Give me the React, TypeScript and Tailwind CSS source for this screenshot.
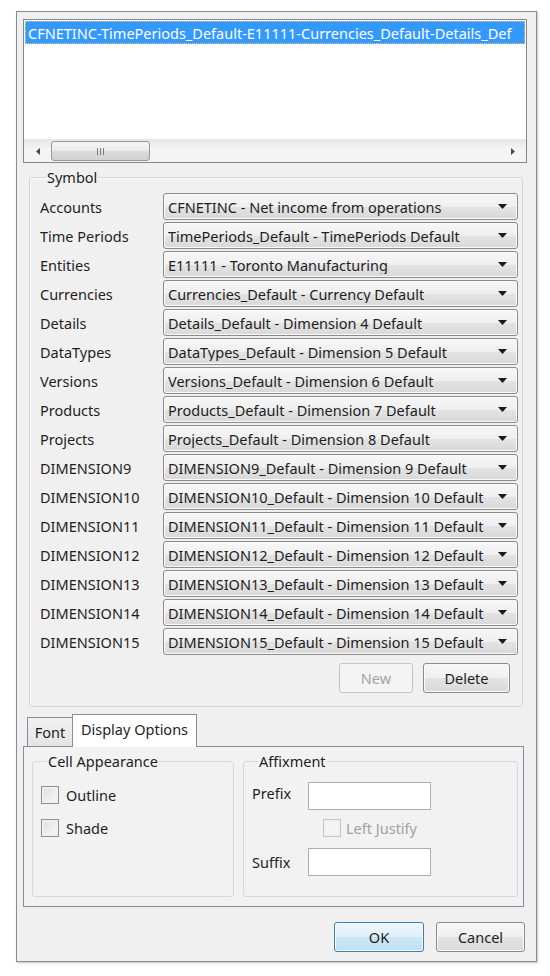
import React from "react";

const ROWS: [string, string][] = [
  ["Accounts", "CFNETINC - Net income from operations"],
  ["Time Periods", "TimePeriods_Default - TimePeriods Default"],
  ["Entities", "E11111 - Toronto Manufacturing"],
  ["Currencies", "Currencies_Default - Currency Default"],
  ["Details", "Details_Default - Dimension 4 Default"],
  ["DataTypes", "DataTypes_Default - Dimension 5 Default"],
  ["Versions", "Versions_Default - Dimension 6 Default"],
  ["Products", "Products_Default - Dimension 7 Default"],
  ["Projects", "Projects_Default - Dimension 8 Default"],
  ["DIMENSION9", "DIMENSION9_Default - Dimension 9 Default"],
  ["DIMENSION10", "DIMENSION10_Default - Dimension 10 Default"],
  ["DIMENSION11", "DIMENSION11_Default - Dimension 11 Default"],
  ["DIMENSION12", "DIMENSION12_Default - Dimension 12 Default"],
  ["DIMENSION13", "DIMENSION13_Default - Dimension 13 Default"],
  ["DIMENSION14", "DIMENSION14_Default - Dimension 14 Default"],
  ["DIMENSION15", "DIMENSION15_Default - Dimension 15 Default"],
];

const btnGray =
  "border border-[#8a8a8a] rounded-[3px] bg-[linear-gradient(to_bottom,#f7f7f7_0%,#efefef_50%,#e3e3e3_51%,#d9d9d9_100%)] shadow-[inset_0_0_0_1px_#fbfbfb]";

function DownArrow() {
  return (
    <svg width="9" height="5" viewBox="0 0 9 5" className="shrink-0">
      <path d="M0 0 H9 L4.5 5 Z" fill="#1a1a1a" />
    </svg>
  );
}

function Combo({ value }: { value: string }) {
  return (
    <div className={`flex-1 h-[27px] flex items-center pl-[4px] pr-[10px] ${btnGray}`}>
      <span className="flex-1 overflow-hidden whitespace-nowrap">{value}</span>
      <DownArrow />
    </div>
  );
}

function Checkbox({ disabled }: { disabled?: boolean }) {
  return (
    <div
      className={`w-[18px] h-[18px] shrink-0 border ${
        disabled ? "border-[#c4c4c4] bg-[#f4f4f4]" : "border-[#8f8f8f] bg-[linear-gradient(135deg,#dcdcdc,#fbfbfb)]"
      } shadow-[inset_0_0_0_2px_#f0f0f0]`}
    />
  );
}

export default function App() {
  return (
    <div className="min-h-screen bg-white pt-[11px] pl-[16px] font-['Noto_Sans',sans-serif] text-[14.5px] leading-[18px] text-[#1e1e1e]">
      <div className="w-[521px] h-[951px] border border-[#8c8c8c] bg-[#f0f0f0] shadow-[1px_1px_2px_rgba(0,0,0,0.25)] flex flex-col pl-[6px] pt-[7px]">
        {/* list of symbols */}
        <div className="w-[504px] h-[144px] border border-[#828790] bg-white flex flex-col">
          <div className="mt-[1px] mx-[1px] h-[23px] bg-[#3399ff] text-white flex items-center pl-[3px] overflow-hidden whitespace-nowrap outline-1 outline-dotted outline-[#f3c47b] -outline-offset-1">
            CFNETINC-TimePeriods_Default-E11111-Currencies_Default-Details_Def
          </div>
          <div className="flex-1" />
          <div className="h-[23px] flex items-center bg-[linear-gradient(to_bottom,#e6e6e6,#f4f4f4_40%,#f4f4f4)] border-t border-[#e9e9e9]">
            <div className="w-[27px] flex justify-center">
              <svg width="4" height="7" viewBox="0 0 4 7">
                <path d="M4 0 V7 L0 3.5 Z" fill="#4a4a4a" />
              </svg>
            </div>
            <div className="w-[99px] h-[20px] border border-[#979797] rounded-[3px] bg-[linear-gradient(to_bottom,#f6f6f6,#e9e9e9_50%,#dbdbdb_51%,#d2d2d2)] flex items-center justify-center gap-[2px]">
              <span className="w-[1px] h-[7px] bg-[#7a7a7a]" />
              <span className="w-[1px] h-[7px] bg-[#7a7a7a]" />
              <span className="w-[1px] h-[7px] bg-[#7a7a7a]" />
            </div>
            <div className="flex-1" />
            <div className="w-[27px] flex justify-center">
              <svg width="4" height="7" viewBox="0 0 4 7">
                <path d="M0 0 V7 L4 3.5 Z" fill="#4a4a4a" />
              </svg>
            </div>
          </div>
        </div>

        {/* Symbol group */}
        <fieldset className="ml-[6px] mt-[5px] w-[494px] border border-[#d5d5d5] rounded-[3px] pl-[10px] pr-[4px] pt-[7px] pb-[13px] shadow-[inset_1px_1px_0_#fafafa]">
          <legend className="ml-[6px] px-[1px]">Symbol</legend>
          <div className="flex flex-col gap-[2px]">
            {ROWS.map(([label, value]) => (
              <div key={label} className="flex items-center">
                <span className="w-[123px] shrink-0">{label}</span>
                <Combo value={value} />
              </div>
            ))}
          </div>
          <div className="flex justify-end gap-[10px] mt-[8px] pr-[8px]">
            <button className="w-[74px] h-[30px] border border-[#c2c6c9] rounded-[3px] bg-[#f4f4f4] text-[#a3a3a3]">
              New
            </button>
            <button className={`w-[87px] h-[30px] ${btnGray}`}>Delete</button>
          </div>
        </fieldset>

        {/* tabs */}
        <div className="mt-[6px] w-[501px] flex flex-col">
          <div className="flex items-end h-[33px] pl-[4px]">
            <div className="w-[46px] h-[29px] border border-b-0 border-[#898c95] bg-[linear-gradient(to_bottom,#f2f2f2,#e4e4e4)] flex items-center justify-center">
              Font
            </div>
            <div className="w-[125px] h-[33px] border border-b-0 border-[#898c95] bg-white relative z-10 -mb-px -ml-px flex items-center justify-center pb-[4px]">
              Display Options
            </div>
          </div>
          <div className="h-[161px] border border-[#898c95] bg-[#f2f2f2] flex gap-[9px] pl-[8px] pt-[5px]">
            <fieldset className="w-[202px] h-[145px] border border-[#d9d9d9] rounded-[3px] pl-[8px] pt-[16px]">
              <legend className="ml-[6px] px-[1px]">Cell Appearance</legend>
              <div className="flex flex-col gap-[15px]">
                <label className="flex items-center gap-[7px]">
                  <Checkbox />
                  <span>Outline</span>
                </label>
                <label className="flex items-center gap-[7px]">
                  <Checkbox />
                  <span>Shade</span>
                </label>
              </div>
            </fieldset>
            <fieldset className="w-[275px] h-[145px] border border-[#d9d9d9] rounded-[3px] pl-[8px] pt-[12px]">
              <legend className="ml-[6px] px-[1px]">Affixment</legend>
              <div className="flex">
                <span className="w-[56px] pt-[2px]">Prefix</span>
                <div className="w-[123px] h-[28px] border border-[#abadb3] bg-white" />
              </div>
              <label className="flex items-center gap-[5px] ml-[71px] mt-[9px] text-[#a0a0a0]">
                <Checkbox disabled />
                <span>Left Justify</span>
              </label>
              <div className="flex items-center mt-[11px]">
                <span className="w-[56px]">Suffix</span>
                <div className="w-[123px] h-[28px] border border-[#abadb3] bg-white" />
              </div>
            </fieldset>
          </div>
        </div>

        {/* dialog buttons */}
        <div className="flex justify-end gap-[12px] mt-[15px] pr-[11px]">
          <button className="w-[90px] h-[30px] border border-[#3c7fb1] rounded-[3px] bg-[linear-gradient(to_bottom,#edf6fc_0%,#e0eff9_50%,#cde6f6_51%,#c0dff3_100%)] shadow-[inset_0_0_0_1px_#f4fafe]">
            OK
          </button>
          <button className={`w-[89px] h-[30px] ${btnGray}`}>Cancel</button>
        </div>
      </div>
    </div>
  );
}
